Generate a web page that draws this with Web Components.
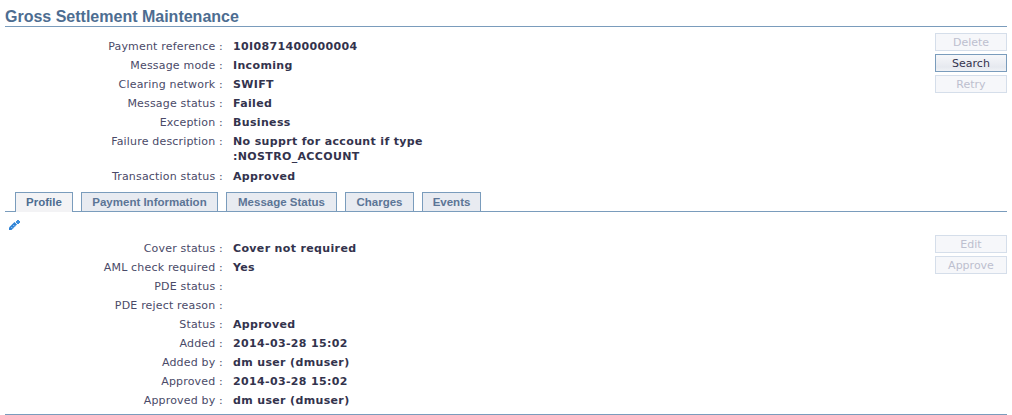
<!DOCTYPE html>
<html>
<head>
<meta charset="utf-8">
<title>Gross Settlement Maintenance</title>
<style>
  html, body { margin: 0; background: #fff; }
  body { font: 11px "DejaVu Sans", Verdana, sans-serif; color: #33334d; }
</style>
</head>
<body>
<gs-page>
  <gs-title slot="title">Gross Settlement Maintenance</gs-title>

  <gs-section slot="top" style="margin-top: 10px">
    <gs-row label="Payment reference">10I0871400000004</gs-row>
    <gs-row label="Message mode">Incoming</gs-row>
    <gs-row label="Clearing network">SWIFT</gs-row>
    <gs-row label="Message status">Failed</gs-row>
    <gs-row label="Exception">Business</gs-row>
    <gs-row label="Failure description" style="padding-bottom: 3px">No supprt for account if type :NOSTRO_ACCOUNT</gs-row>
    <gs-row label="Transaction status">Approved</gs-row>
    <gs-button slot="actions" disabled>Delete</gs-button>
    <gs-button slot="actions" focused>Search</gs-button>
    <gs-button slot="actions" disabled>Retry</gs-button>
  </gs-section>

  <gs-tabs slot="tabs">
    <gs-tab active style="width: 58px">Profile</gs-tab>
    <gs-tab style="width: 137px">Payment Information</gs-tab>
    <gs-tab style="width: 111px">Message Status</gs-tab>
    <gs-tab style="width: 69px">Charges</gs-tab>
    <gs-tab style="width: 59px">Events</gs-tab>
  </gs-tabs>

  <gs-edit-icon slot="icon"></gs-edit-icon>

  <gs-section slot="bottom">
    <gs-row label="Cover status">Cover not required</gs-row>
    <gs-row label="AML check required">Yes</gs-row>
    <gs-row label="PDE status"></gs-row>
    <gs-row label="PDE reject reason"></gs-row>
    <gs-row label="Status">Approved</gs-row>
    <gs-row label="Added">2014-03-28 15:02</gs-row>
    <gs-row label="Added by">dm user (dmuser)</gs-row>
    <gs-row label="Approved">2014-03-28 15:02</gs-row>
    <gs-row label="Approved by">dm user (dmuser)</gs-row>
    <gs-button slot="actions" disabled>Edit</gs-button>
    <gs-button slot="actions" disabled>Approve</gs-button>
  </gs-section>
</gs-page>

<script>
// small helper, every element just sets its shadow html once
class GsBase extends HTMLElement {
  constructor() {
    super();
    this.attachShadow({ mode: 'open' });
    this.shadowRoot.innerHTML = this.constructor.html;
  }
}

class GsPage extends GsBase {
  static html = `
    <style>
      :host { display: block; height: 415px; box-sizing: border-box; padding: 0 5px; overflow: hidden; }
      main { display: flex; flex-direction: column; height: 415px; }
      .foot { border-top: 1px solid #7a9cbc; margin-top: 4px; }
    </style>
    <main>
      <slot name="title"></slot>
      <slot name="top"></slot>
      <slot name="tabs"></slot>
      <slot name="icon"></slot>
      <slot name="bottom"></slot>
      <div class="foot"></div>
    </main>
  `;
}

class GsTitle extends GsBase {
  static html = `
    <style>
      :host {
        display: block;
        height: 26px;
        box-sizing: content-box;
        border-bottom: 1px solid #7a9cbc;
        font: bold 16px/33px "Liberation Sans", Arial, sans-serif;
        color: #4d6d91;
      }
    </style>
    <slot></slot>
  `;
}

class GsSection extends GsBase {
  static html = `
    <style>
      :host { display: flex; justify-content: space-between; align-items: flex-start; }
      .rows { display: flex; flex-direction: column; }
      .actions { display: flex; flex-direction: column; gap: 3px; margin-top: -4px; }
    </style>
    <div class="rows"><slot></slot></div>
    <div class="actions"><slot name="actions"></slot></div>
  `;
}

class GsRow extends GsBase {
  static html = `
    <style>
      :host {
        display: grid;
        grid-template-columns: 218px 200px;
        column-gap: 10px;
        padding: 2px 0;
        line-height: 15px;
        min-height: 15px;
      }
      .label { text-align: right; color: #4a4a68; letter-spacing: .18px; }
      .label::after { content: " :"; white-space: pre; }
      .value { font-weight: bold; color: #33334d; letter-spacing: .35px; }
    </style>
    <div class="label"></div>
    <div class="value"><slot></slot></div>
  `;
  connectedCallback() {
    this.shadowRoot.querySelector('.label').textContent = this.getAttribute('label');
  }
}

class GsButton extends GsBase {
  static html = `
    <style>
      :host {
        display: block;
        width: 72px;
        height: 18px;
        box-sizing: border-box;
        border: 1px solid #7a9cbc;
        background: linear-gradient(#f6f7fa, #e6e9ef 75%, #f0f2f6);
        text-align: center;
        line-height: 18px;
        color: #33334d;
        font-size: 11px;
      }
      :host([disabled]) {
        border-color: #d5deea;
        background: #f6f7fa;
        color: #bdbfcf;
      }
    </style>
    <slot></slot>
  `;
}

class GsTabs extends GsBase {
  static html = `
    <style>
      :host {
        display: flex;
        gap: 8px;
        height: 19px;
        padding-left: 10px;
        margin-top: 6px;
        border-bottom: 1px solid #7a9cbc;
      }
    </style>
    <slot></slot>
  `;
}

class GsTab extends GsBase {
  static html = `
    <style>
      :host {
        display: block;
        box-sizing: border-box;
        height: 19px;
        border: 1px solid #7a9cbc;
        border-bottom: 0;
        background: #e8ebf1;
        text-align: center;
        font: bold 11.5px/19px "Liberation Sans", Arial, sans-serif;
        color: #5c7596;
      }
      :host([active]) {
        height: 20px;
        background: #f3f3f5;
        color: #4d6d91;
      }
    </style>
    <slot></slot>
  `;
}

class GsEditIcon extends GsBase {
  static html = `
    <style>
      :host { display: block; height: 27px; padding: 8px 0 0 4px; box-sizing: border-box; }
      svg { display: block; }
    </style>
    <svg width="11" height="10" viewBox="0 0 11 10">
      <path fill="#2f83d6" d="M0 10 L0 7.500 L5.500 2 L8 4.500 L2.500 10 Z"/>
      <path fill="#8fc0ee" d="M2 7h1v1h-1zM4 5h1v1h-1zM3.500 7.500h1v1h-1zM5.500 5.500h1v1h-1z"/>
      <path fill="#3d8fdc" d="M7 1h1v-1h2v1h1v2h-1v1h-2v-1h-1z"/>
    </svg>
  `;
}

customElements.define('gs-page', GsPage);
customElements.define('gs-title', GsTitle);
customElements.define('gs-section', GsSection);
customElements.define('gs-row', GsRow);
customElements.define('gs-button', GsButton);
customElements.define('gs-tabs', GsTabs);
customElements.define('gs-tab', GsTab);
customElements.define('gs-edit-icon', GsEditIcon);
</script>
</body>
</html>
